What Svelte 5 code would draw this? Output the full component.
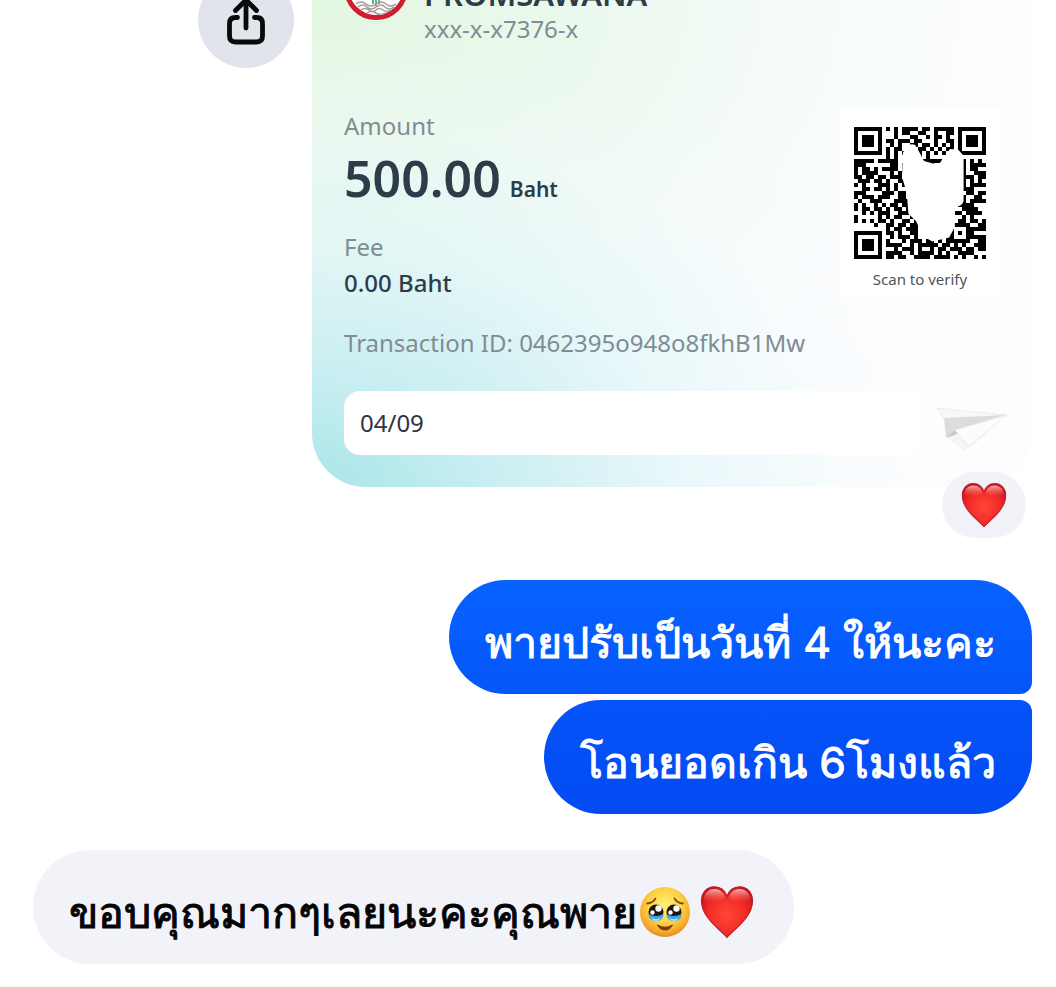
<script>
  const slip = {
    name: 'PROMSAWANA',
    account: 'xxx-x-x7376-x',
    amount: '500.00',
    fee: '0.00 Baht',
    transaction: '0462395o948o8fkhB1Mw',
    memo: '04/09'
  }

  const sent = [
    { id: 1, text: 'พายปรับเป็นวันที่ 4 ให้นะคะ' },
    { id: 2, text: 'โอนยอดเกิน 6โมงแล้ว' }
  ]

  const qr = [
    '#######.#.#.####.##.#####.#######',
    '#.....#...#.##..##..#..##.#.....#',
    '#.###.#...#...##..#.##.#..#.###.#',
    '#.###.#.##.###.##...#..##.#.###.#',
    '#.###.#..#.#..##.##.#.#.#.#.###.#',
    '#.....#.#.##....##.#.#.##.#.....#',
    '#######.#.#.#.#.#.#.#.#.#.#######',
    '........#.#.....#.#..............',
    '#####.#####.....######.....#.#.#.',
    '###......##.#...####.......#.####',
    '#.##.#.####.#....#.........#.##..',
    '#.####...#.##..............#..###',
    '##.##.##.###.#.............###.##',
    '.###.##.#..###.............#.#.#.',
    '#.#...###.#.#..............#.####',
    '..##.##.#.#..#.............###...',
    '###....###.##...............##.##',
    '#.###.###..##..............#..##.',
    '.#..###...####.............#.####',
    '#.#..#.#.##.##............####...',
    '#.##.##.#.##.#.............####..',
    '..#.#.###..####..........##.####.',
    '#.....#.#.##..#............#.#...',
    '#.#.#.##.#..##.#..........##.##.#',
    '.....#..##.##.##........#####..##',
    '........#.##.###........#...#####',
    '#######.##.#..##........#.#.##...',
    '#.....#..#.###.#.......##...#####',
    '#.###.#.#...#.###.##.#.######..##',
    '#.###.#.####..#.#####.##.#.#..###',
    '#.###.#...#.###.#..#.##.###.##.##',
    '#.....#.####..#.####.#.#..####...',
    '#######.##.##..####.####.#.#..#.#'
  ]

  // one horizontal run of dark modules per path segment
  const qrPath = qr
    .map((row, y) => [...row.matchAll(/#+/g)].map((m) => `M${m.index} ${y}h${m[0].length}v1h-${m[0].length}z`).join(''))
    .join('')
</script>

{#snippet heart(size)}
  <svg class="emoji" width={size} height={size} viewBox="0 0 54 54" role="img" aria-label="❤️">
    <defs>
      <radialGradient id="heart-fill" cx="50%" cy="55%" r="60%">
        <stop offset="0" stop-color="#ff4636" />
        <stop offset=".6" stop-color="#f32c28" />
        <stop offset="1" stop-color="#c9141d" />
      </radialGradient>
      <linearGradient id="heart-shine" x1="0" y1="0" x2="0" y2="1">
        <stop offset="0" stop-color="#ffd8d4" stop-opacity=".8" />
        <stop offset="1" stop-color="#ff6a5c" stop-opacity="0" />
      </linearGradient>
    </defs>
    <path
      d="M27 52.500C22 46 1.500 33 1.500 16C1.500 7.500 7 1.800 14.500 1.800C20.500 1.800 25 5.500 27 11.500C29 5.500 33.500 1.800 39.500 1.800C47 1.800 52.500 7.500 52.500 16C52.500 33 32 46 27 52.500Z"
      fill="url(#heart-fill)"
      stroke="#b81f26"
      stroke-width="1.200"
    />
    <path d="M4 15C4 8 8.500 4 14.500 4C20 4 23.500 7.500 25 12.500C20 18 9 19 4 15Z" fill="url(#heart-shine)" />
    <path d="M50 15C50 8 45.500 4 39.500 4C34 4 30.500 7.500 29 12.500C34 18 45 19 50 15Z" fill="url(#heart-shine)" />
  </svg>
{/snippet}

<main class="thread">
  <div class="row">
    <button class="share" aria-label="Share">
      <svg width="48" height="56" viewBox="0 0 48 56" fill="none" stroke="#08090b" stroke-width="4.800" stroke-linecap="round" stroke-linejoin="round">
        <path d="M24 36V8M13.500 18.500L24 8L34.500 18.500" />
        <path d="M15.500 25.500H13.500Q7.500 25.500 7.500 31.500V44Q7.500 50 13.500 50H34.500Q40.500 50 40.500 44V31.500Q40.500 25.500 34.500 25.500H32.500" />
      </svg>
    </button>

    <article class="slip">
      <header>
        <svg class="bank" width="64" height="64" viewBox="0 0 64 64" aria-hidden="true">
          <circle cx="32" cy="32" r="29.500" fill="#fff" stroke="#cf1f2e" stroke-width="5" />
          <path d="M29 34V48M32 34V50M35 34V48" stroke="#2f9a5b" stroke-width="1.500" />
          <path d="M12 48q5-4 10 0t10 0t10 0t10 0M14 51q5-4 9 0t9 0t9 0t9 0M17 54q4-3 8 0t7 0t7 0t8 0M23 57q4-3 9 0t9 0" fill="none" stroke="#a39c9a" stroke-width="1.500" />
        </svg>
        <div class="who">
          <p class="name">{slip.name}</p>
          <p class="muted">{slip.account}</p>
        </div>
      </header>

      <div class="details">
        <dl>
          <dt>Amount</dt>
          <dd class="amount">{slip.amount} <span>Baht</span></dd>
          <dt>Fee</dt>
          <dd class="fee">{slip.fee}</dd>
        </dl>
        <figure>
          <svg width="132" height="132" viewBox="0 0 33 33" shape-rendering="crispEdges" role="img" aria-label="QR code">
            <path d={qrPath} fill="#000" />
            <path
              d="M12.200 6.500Q13.500 3.600 15.300 4.500Q16.500 6.500 17.500 8.500L20 9.200L21 9.700L22.500 7.500L24 5.500L26 5.600L27.400 7.200V18.500Q27 20 25.300 19.800L25.200 25L23.800 27.600L19.600 28.600L17.300 27.400L15.500 23.500L13.600 21.700L13.200 16.500L12 12.500Z"
              fill="#fff"
              shape-rendering="auto"
            />
          </svg>
          <figcaption>Scan to verify</figcaption>
        </figure>
      </div>

      <p class="muted">Transaction ID: {slip.transaction}</p>

      <div class="memo">
        {slip.memo}
        <svg class="plane" width="80" height="56" viewBox="0 0 80 56" aria-hidden="true">
          <path d="M14 38L32 52L56 34Z" fill="#eee" opacity=".6" />
          <path d="M5 9L75 16L13 22Z" fill="#f8f8f8" stroke="#e6e6e6" stroke-width=".7" />
          <path d="M12 19L75 16L24 31L14 39Z" fill="#dcdcdc" />
          <path d="M14 39L23 31L26 35Z" fill="#c8c8c8" />
          <path d="M23 31L75 16L37 47Z" fill="#fcfcfc" stroke="#e6e6e6" stroke-width=".7" />
        </svg>
      </div>
    </article>
  </div>

  <button class="reaction" aria-label="Reactions">{@render heart(46)}</button>

  <div class="sent">
    {#each sent as message (message.id)}
      <p class="bubble">{message.text}</p>
    {/each}
  </div>

  <p class="bubble received">
    <span>ขอบคุณมากๆเลยนะคะคุณพาย</span>
    <span class="emojis">
      <svg class="emoji" width="52" height="52" viewBox="0 0 52 52" role="img" aria-label="🥹">
        <defs>
          <radialGradient id="face" cx="50%" cy="38%" r="62%">
            <stop offset="0" stop-color="#fff07a" />
            <stop offset=".55" stop-color="#fdd244" />
            <stop offset=".85" stop-color="#f5a72a" />
            <stop offset="1" stop-color="#e08a22" />
          </radialGradient>
        </defs>
        <circle cx="26" cy="26" r="25" fill="url(#face)" />
        <path d="M8 17.500Q14 17 16.500 12.500M44 17.500Q38 17 35.500 12.500" fill="none" stroke="#8a4b10" stroke-width="1.800" stroke-linecap="round" />
        <g id="eye">
          <circle cx="17" cy="26" r="7.500" fill="#20140f" />
          <path d="M9.500 28Q17 32 24.500 28Q24.500 35 17 35Q9.500 35 9.500 28Z" fill="#3da5e2" />
          <path d="M12 31.500Q17 34.500 22 31.500Q20 35 17 35Q14 35 12 31.500Z" fill="#9fe0fa" />
          <circle cx="19.500" cy="22.500" r="3.200" fill="#fff" />
          <circle cx="13.500" cy="26.500" r="2.200" fill="#fff" />
        </g>
        <use href="#eye" x="18" />
        <path d="M18.500 39Q26 43.500 33.500 39Q31 44 26 44Q21 44 18.500 39Z" fill="#7a3b10" stroke="#7a3b10" stroke-linejoin="round" />
      </svg>
      {@render heart(54)}
    </span>
  </p>
</main>

<style>
  :global(body) {
    margin: 0;
    background: #fff;
  }

  /* the thread is scrolled, so its first message starts above the window */
  .thread {
    display: flex;
    flex-direction: column;
    align-items: flex-end;
    margin-top: -60px;
    padding: 0 24px 23px 33px;
    font-family: Inter, 'Liberation Sans', sans-serif;
  }

  p, dl, dd, figure {
    margin: 0;
  }

  button {
    border: 0;
    padding: 0;
    cursor: pointer;
  }

  .row {
    display: flex;
    justify-content: flex-end;
    align-items: flex-start;
    gap: 18px;
    width: 100%;
  }

  .share {
    display: flex;
    flex: none;
    align-items: center;
    justify-content: center;
    width: 96px;
    height: 96px;
    margin-top: 32px;
    border-radius: 50%;
    background: #e1e4ea;
  }

  .slip {
    flex: 0 1 720px;
    box-sizing: border-box;
    padding: 16px 32px 32px;
    border-radius: 54px;
    background:
      radial-gradient(ellipse 95% 85% at 0% 102%, #a6e5e8 0%, rgba(186, 234, 238, .8) 25%, rgba(215, 243, 246, .5) 55%, rgba(240, 250, 252, .3) 80%, rgba(255, 255, 255, 0) 100%),
      radial-gradient(ellipse 100% 85% at 0% 12%, #e4f7e1 0%, rgba(229, 247, 232, .8) 35%, rgba(240, 250, 245, .5) 70%, rgba(255, 255, 255, 0) 100%),
      #fdfdff;
    color: #2e3c49;
    font-family: 'Noto Sans', sans-serif;
    font-size: 24px;
    line-height: 34px;
  }

  header {
    display: flex;
    gap: 16px;
  }

  .bank {
    flex: none;
  }

  .who {
    padding-top: 20px;
  }

  .name {
    font-size: 31px;
    font-weight: 600;
    line-height: 36px;
  }

  .muted, dt {
    color: #7f8d93;
  }

  .details {
    display: flex;
    justify-content: space-between;
    align-items: flex-start;
    margin: 63px 0 26px;
  }

  dd {
    font-weight: 500;
  }

  .amount {
    margin: 7px 0 24px;
    font-size: 50px;
    font-weight: 600;
    line-height: 56px;
  }

  .amount span {
    margin-left: -4px;
    font-size: 21px;
    line-height: 24px;
  }

  .fee {
    margin-top: 2px;
  }

  figure {
    display: flex;
    flex-direction: column;
    align-items: center;
    gap: 8px;
    padding: 18px 14px 6px;
    background: #fff;
  }

  figcaption {
    color: #4d5560;
    font-size: 15px;
    line-height: 24px;
  }

  .memo {
    position: relative;
    margin-top: 31px;
    padding: 15px 16px;
    border-radius: 16px;
    background: linear-gradient(90deg, #fff 85%, rgba(255, 255, 255, 0));
    color: #30343e;
  }

  .plane {
    position: absolute;
    top: 8px;
    right: -12px;
  }

  .emoji {
    display: block;
    flex: none;
  }

  .reaction {
    display: flex;
    align-items: center;
    justify-content: center;
    width: 84px;
    height: 66px;
    margin: -15px 6px 42px 0;
    border-radius: 33px;
    background: #f2f3f8;
    z-index: 1;
  }

  .sent {
    display: flex;
    flex-direction: column;
    align-items: flex-end;
    gap: 6px;
    margin-bottom: 36px;
  }

  .bubble {
    box-sizing: border-box;
    padding: 32px 36px 22px;
    border-radius: 57px;
    font-size: 43px;
    line-height: 60px;
    -webkit-text-stroke: 1px currentColor;
  }

  .sent .bubble {
    border-bottom-right-radius: 12px;
    background: linear-gradient(#0762ff, #0556fa);
    color: #fff;
  }

  .sent .bubble:last-child {
    border-radius: 57px 12px 57px 57px;
    background: linear-gradient(#0554f9, #034af2);
  }

  .received {
    display: flex;
    align-self: flex-start;
    align-items: center;
    gap: 2px;
    padding-right: 40px;
    background: #f2f3f8;
    color: #050507;
  }

  .emojis {
    display: flex;
    align-items: center;
    gap: 9px;
  }
</style>
